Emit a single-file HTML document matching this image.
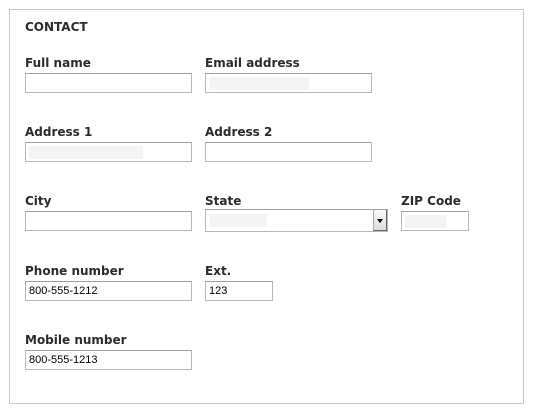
<!DOCTYPE html><html><head><style>
body{margin:0;width:535px;height:416px;background:#fff;position:relative;font-family:"DejaVu Sans","Liberation Sans",sans-serif;overflow:hidden}
.box{position:absolute;left:9px;top:9px;width:515px;height:395px;border:1px solid #c8c8c8;box-sizing:border-box}
.l{position:absolute;font-weight:bold;font-size:12px;color:#2b2b2b;line-height:14px}
.i{position:absolute;height:20px;border:1px solid #b8b8b8;border-top-color:#a0a0a0;box-sizing:border-box;background:#fff;font-family:"Liberation Sans",Arial,sans-serif;font-size:11px;color:#000;padding:3px 0 0 3px}
.f{position:absolute;top:3px;left:3px;height:13px;background:#f4f4f4}
</style></head><body>
<div class="box"></div>
<div class="l" style="left:25px;top:20px">CONTACT</div>
<div class="l" style="left:25px;top:56px">Full name</div>
<div class="l" style="left:205px;top:56px">Email address</div>
<div class="i" style="left:25px;top:73px;width:167px"></div>
<div class="i" style="left:205px;top:73px;width:167px"><div class="f" style="width:100px"></div></div>
<div class="l" style="left:25px;top:125px">Address 1</div>
<div class="l" style="left:205px;top:125px">Address 2</div>
<div class="i" style="left:25px;top:142px;width:167px"><div class="f" style="width:114px"></div></div>
<div class="i" style="left:205px;top:142px;width:167px"></div>
<div class="l" style="left:25px;top:194px">City</div>
<div class="l" style="left:205px;top:194px">State</div>
<div class="l" style="left:401px;top:194px">ZIP Code</div>
<div class="i" style="left:25px;top:211px;width:167px"></div>
<div class="i" style="left:205px;top:209px;width:183px;height:23px"><div class="f" style="width:58px;top:4px"></div>
<div style="position:absolute;right:0;top:0;width:14px;height:21px;background:linear-gradient(#fafafa,#ddd);border-left:1px solid #aaa;border-right:1px solid #666;border-bottom:1px solid #666;box-sizing:border-box"><div style="position:absolute;left:3px;top:9px;border-left:3px solid transparent;border-right:3px solid transparent;border-top:4px solid #000"></div></div></div>
<div class="i" style="left:401px;top:211px;width:68px"><div class="f" style="width:42px"></div></div>
<div class="l" style="left:25px;top:264px">Phone number</div>
<div class="l" style="left:205px;top:264px">Ext.</div>
<div class="i" style="left:25px;top:281px;width:167px">800-555-1212</div>
<div class="i" style="left:205px;top:281px;width:68px">123</div>
<div class="l" style="left:25px;top:333px">Mobile number</div>
<div class="i" style="left:25px;top:350px;width:167px">800-555-1213</div>
</body></html>
